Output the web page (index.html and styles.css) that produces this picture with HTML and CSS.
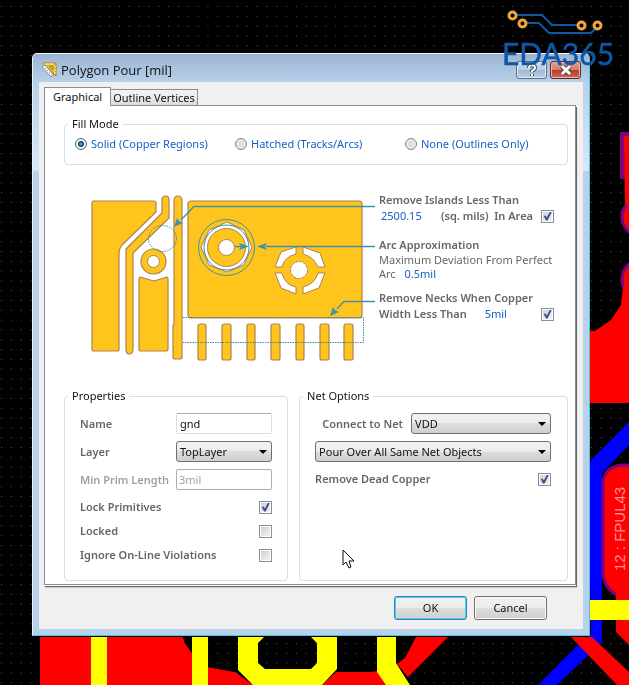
FILE: index.html
```html
<!DOCTYPE html>
<html lang="en">
<head>
    <meta charset="UTF-8">
    <meta name="viewport" content="width=device-width, initial-scale=1.0">
    <title>Polygon Pour [mil]</title>
    <link rel="stylesheet" href="styles.css">
</head>
<body>

    <!-- PCB behind the dialog -->
    <svg class="board" viewBox="0 0 629 685" preserveAspectRatio="xMinYMin slice" aria-hidden="true">
        <defs>
            <pattern id="grid" x="1" y="6" width="9.83" height="9.8" patternUnits="userSpaceOnUse">
                <rect width="1" height="1" fill="#555"/>
            </pattern>
        </defs>
        <rect width="629" height="685" fill="#000"/>
        <rect width="629" height="685" fill="url(#grid)"/>
        <g fill="#f00">
            <path d="M40 637H183L185 643L191 652L208 667L235 672L253 685H40Z"/>
            <path d="M320 687L336 672L370 672L379 671L388 687Z"/>
            <path d="M416 637H448L408 677L397 664L405 658Z"/>
        </g>
        <path d="M183 637L185 643L192 653V637ZM208 637V667L235 672H240V637Z" fill="#000"/>
        <path d="M208 637V667L235 672H240V637Z" fill="url(#grid)"/>
        <g fill="#ff0">
            <path d="M91 637H107V685H91ZM192 637H208V685H192Z"/>
            <path fill-rule="evenodd" d="M238 637H337V669L322 685H253L238 670ZM264 637L258 643V663L265 669H311L317 663V643L311 637Z"/>
            <path d="M377 637H396V663L410 685H386L377 672Z"/>
        </g>
        <path d="M588 463L629 422V445L602 473V642L557 685H538L578 645L591 634Z" fill="#00f"/>
        <path d="M571 637H592L629 672V685H617Z" fill="#f00"/>
        <path d="M620 132H629V179H620Z" fill="#800080"/>
        <circle cx="641" cy="217" r="19" fill="#f00" stroke="#800080" stroke-width="3"/>
        <circle cx="641" cy="279" r="19" fill="#f00" stroke="#800080" stroke-width="3"/>
        <path d="M624 136H629V205H625ZM623 287L621 305L611 320L595 331H590V403H629V280Z" fill="#f00"/>
        <path d="M629 580H616V632L629 645Z" fill="#f00"/>
        <path d="M640 465H622Q603 467 603 485V570Q603 588 617 595H640Z" fill="#f00" stroke="#800080" stroke-width="3"/>
        <path d="M616 588H629V600H616Z" fill="#f00"/>
        <path d="M590 600H629V620H590Z" fill="#ff0"/>
        <text class="pad-name" transform="translate(625 571) rotate(-90)">12 : FPUL43</text>
    </svg>

    <main class="dialog">
        <header class="titlebar">
            <svg class="app-icon" width="16" height="16" viewBox="0 0 16 16" aria-hidden="true">
                <path fill-rule="evenodd" d="M1 1H14V14ZM7 4L11 8V4Z" fill="#f0c020" stroke="#a8801a"/>
                <path d="M3 1V3M5 1V3M7 1V3M9 1V3M11 1V3M14 5H12M14 8H12M14 11H12" stroke="#fff2b0"/>
                <path d="M0 5L3 3L12 13L9 15Z" fill="#f4f4f4" stroke="#8c8c8c"/>
                <path d="M3 7L4 6M5 9L6 8M7 11L8 10M9 13L10 12" stroke="#999"/>
            </svg>
            <h1>Polygon Pour [mil]</h1>
            <button type="button" class="caption-btn" aria-label="Help">
                <svg width="14" height="14" viewBox="0 0 14 14"><path d="M4 5Q4 2 7 2Q10 2 10 5Q10 6 7 8V9M7 11V13" fill="none" stroke="#4a5364" stroke-width="4"/><path d="M4 5Q4 2 7 2Q10 2 10 5Q10 6 7 8V9M7 11V13" fill="none" stroke="#fff" stroke-width="2"/></svg>
            </button>
            <button type="button" class="caption-btn close" aria-label="Close">
                <svg width="14" height="12" viewBox="0 0 14 12"><path d="M3 2L11 10M11 2L3 10" stroke="#54404a" stroke-width="5"/><path d="M3 2L11 10M11 2L3 10" stroke="#fff" stroke-width="3"/></svg>
            </button>
        </header>

        <form class="client">
            <nav class="tabs">
                <button type="button" class="tab active">Graphical</button>
                <button type="button" class="tab">Outline Vertices</button>
            </nav>

            <div class="panel">
                <fieldset class="fill-mode">
                    <legend>Fill Mode</legend>
                    <label><input type="radio" name="fill" checked>Solid (Copper Regions)</label>
                    <label><input type="radio" name="fill">Hatched (Tracks/Arcs)</label>
                    <label><input type="radio" name="fill">None (Outlines Only)</label>
                </fieldset>

                <section class="preview">
                    <svg class="drawing" width="290" height="175" viewBox="85 190 290 175" aria-hidden="true">
                        <g fill="#ffc51c" stroke="#b08050" stroke-width="1.200" stroke-linejoin="round">
                            <path d="M93 201H154Q156 201 156 203V212L122 245Q119 249 119 253V349Q119 351 117 351H94Q92 351 92 349V203Q92 201 94 201Z"/>
                            <path d="M162 200Q162 196 166 196Q169 196 169 200V218L133 253V349Q133 354 129 354Q126 354 126 349V249L162 213Z"/>
                            <path d="M174 201Q174 196 178 196Q182 196 182 201V357Q182 359 180 359H175Q173 359 173 357V325H174Z"/>
                            <circle cx="153.500" cy="261.500" r="12.500"/>
                            <path d="M140 277L154 281L167 277Q168 277 168 279V349Q168 351 166 351H141Q139 351 139 349V279Q139 277 140 277Z"/>
                            <rect x="188" y="201" width="174" height="117" rx="3"/>
                            <rect x="198" y="324" width="8" height="36" rx="2"/>
                            <rect x="222" y="324" width="9" height="36" rx="2"/>
                            <rect x="247" y="324" width="8" height="36" rx="2"/>
                            <rect x="271" y="324" width="9" height="36" rx="2"/>
                            <rect x="296" y="324" width="8" height="36" rx="2"/>
                            <rect x="320" y="324" width="9" height="36" rx="2"/>
                            <rect x="344" y="324" width="9" height="36" rx="2"/>
                        </g>
                        <g fill="#fff" stroke="#b08050">
                            <circle cx="153.500" cy="261.500" r="6"/>
                            <path d="M227 222L244 230L252 247L244 265L227 272L209 265L201 247L209 230Z"/>
                            <circle cx="226.500" cy="247.500" r="19" fill="#ffc51c"/>
                            <circle cx="226.500" cy="247.500" r="8"/>
                            <circle cx="299" cy="270" r="8.500" stroke-dasharray="3 1"/>
                            <path d="M275 267L281 252L296 247V254Q284 257 282 267Z"/>
                            <path d="M303 247L320 253L325 267H318Q314 257 303 254Z"/>
                            <path d="M275 273H282Q285 285 296 287V294L281 288Z"/>
                            <path d="M325 273L319 288L303 294V287Q315 284 318 273Z"/>
                        </g>
                        <g fill="none" stroke="#3d93ad">
                            <circle cx="226.500" cy="247.500" r="28"/>
                            <circle cx="226.500" cy="247.500" r="22.500"/>
                            <path d="M375 206.500H194L181 220M235 246.500H242M375 246.500H266M375 301.500H344L337 309" stroke-width="1.300"/>
                            <g stroke="#3987ae" stroke-dasharray="1.500 1">
                                <ellipse cx="162.500" cy="238.500" rx="14" ry="13"/>
                                <path d="M183 317.500H363.500V342.500H183"/>
                            </g>
                        </g>
                        <path d="M174 227L177 218L179 221L183 223ZM249 246.500L239 243L241 246.500L239 250ZM257 246.500L267 243L265 246.500L267 250ZM330 316L333 307L335 310L339 312Z" fill="#3d93ad"/>
                    </svg>

                    <div class="notes">
                        <div class="note">
                            <h2>Remove Islands Less Than</h2>
                            <div class="line">
                                <input type="text" class="value area" value="2500.15" aria-label="Island area">
                                <label for="islands">(sq. mils)&nbsp; In Area</label>
                                <input type="checkbox" id="islands" checked>
                            </div>
                        </div>
                        <div class="note arc">
                            <h2>Arc Approximation</h2>
                            <label for="arc">Maximum Deviation From Perfect Arc</label>
                            <input type="text" class="value" id="arc" value="0.5mil">
                        </div>
                        <div class="note">
                            <h2>Remove Necks When Copper</h2>
                            <div class="line">
                                <label for="necks">Width Less Than</label>
                                <input type="text" class="value neck" value="5mil" aria-label="Neck width">
                                <input type="checkbox" id="necks" checked>
                            </div>
                        </div>
                    </div>
                </section>

                <div class="groups">
                    <fieldset class="properties">
                        <legend>Properties</legend>
                        <div class="field"><label for="name">Name</label><input type="text" id="name" value="gnd"></div>
                        <div class="field"><label for="layer">Layer</label><select id="layer"><option>TopLayer</option></select></div>
                        <div class="field"><label for="prim" class="off">Min Prim Length</label><input type="text" id="prim" value="3mil" disabled></div>
                        <div class="checks">
                            <label>Lock Primitives<input type="checkbox" checked></label>
                            <label>Locked<input type="checkbox"></label>
                            <label>Ignore On-Line Violations<input type="checkbox"></label>
                        </div>
                    </fieldset>

                    <fieldset class="net">
                        <legend>Net Options</legend>
                        <div class="field"><label for="net">Connect to Net</label><select id="net"><option>VDD</option></select></div>
                        <div class="field"><select aria-label="Pour over"><option>Pour Over All Same Net Objects</option></select></div>
                        <label class="dead">Remove Dead Copper<input type="checkbox" checked></label>
                    </fieldset>
                </div>
            </div>

            <footer>
                <button type="button" class="btn default">OK</button>
                <button type="button" class="btn">Cancel</button>
            </footer>
        </form>

        <svg class="pointer" width="14" height="20" viewBox="0 0 14 20" aria-hidden="true">
            <path d="M1 1V16L4 13L7 19L9 18L7 12H12Z" fill="#fff" stroke="#111"/>
        </svg>
    </main>

    <svg class="brand" width="116" height="64" viewBox="500 6 116 64" role="img" aria-label="EDA365">
        <path d="M517 15H542L552 25H577M527 23H539L549 33H591L596 28" fill="none" stroke="#0f57a5" stroke-width="2"/>
        <g fill="#000" stroke="#f0a63c" stroke-width="3">
            <circle cx="512.500" cy="15.500" r="3.500"/>
            <circle cx="522.500" cy="23.500" r="3.500"/>
            <circle cx="581.500" cy="25.500" r="3.500"/>
            <circle cx="597.500" cy="25.500" r="3.500"/>
        </g>
        <text x="502" y="65">EDA365</text>
    </svg>

</body>
</html>
```
FILE: styles.css
```css
body {
    margin: 0;
    background-color: #000;
    font-family: "Noto Sans", "Open Sans", sans-serif;
    font-size: 11px;
    line-height: 16px;
    color: #111;
    min-height: 100vh;
    overflow: hidden;
}

input,
select,
button {
    box-sizing: border-box;
    margin: 0;
    font: inherit;
    color: inherit;
}

h1,
h2 {
    margin: 0;
    font-size: inherit;
}

.board {
    position: fixed;
    top: 0;
    left: 0;
    width: 100%;
    height: 100%;
}

.pad-name {
    font-family: "Liberation Sans", sans-serif;
    font-size: 15px;
    fill: #ff9090;
}

/* Window frame */
.dialog {
    position: relative;
    margin: 53px 39px 49px 32px;
    padding: 0 6px 6px;
    border: 1px solid #46c8e0;
    border-top-color: #f4f8fc;
    border-left-color: #e8f2fb;
    border-radius: 5px 5px 0 0;
    background: linear-gradient(#9ab4d3, #b8d0e9 28px, #dbe8f6 116px, #b9d1ea 118px);
}

.titlebar {
    display: flex;
    align-items: center;
    gap: 3px;
    height: 28px;
    padding: 4px 2px 0 3px;
    box-sizing: border-box;
}

.titlebar h1 {
    flex: 1;
    font-family: "Open Sans", sans-serif;
    font-size: 13px;
    font-weight: normal;
}

.caption-btn {
    display: flex;
    align-items: center;
    justify-content: center;
    width: 31px;
    height: 18px;
    padding: 0;
    border: 1px solid #59708c;
    border-radius: 3px;
    background: linear-gradient(#c9d9ea, #b9cde3 50%, #9db7d3 50%, #bcd2e8);
    box-shadow: inset 0 0 0 1px #dfeaf5;
}

.caption-btn.close {
    border-color: #5c2a2c;
    background: linear-gradient(#e2a193, #d27a69 50%, #b83a26 50%, #cf6a50);
    box-shadow: inset 0 0 0 1px #e8b5aa;
}

.client {
    padding: 5px 7px 0 5px;
    background-color: #f0f0f0;
}

/* Tabs */
.tabs {
    display: flex;
    align-items: flex-end;
    height: 18px;
}

.tab {
    height: 16px;
    padding: 0 2px;
    border: 1px solid #898c95;
    border-left: none;
    border-bottom: none;
    background: linear-gradient(#f3f3f3, #ececec 50%, #dcdcdc);
    line-height: 15px;
}

.tab.active {
    position: relative;
    z-index: 1;
    height: 19px;
    margin-bottom: -1px;
    padding: 0 8px 1px;
    border-left: 1px solid #898c95;
    background: #fff;
}

.panel {
    padding: 10px 7px 3px 19px;
    border: 1px solid #898c95;
    background-color: #fff;
    box-shadow: 0 1px 0 #fff, 1px 2px 0 #666, 1px 3px 1px #ccc;
}

fieldset {
    min-width: 0;
    margin: 0;
    border: 1px solid #d5dfe5;
    border-radius: 4px;
}

legend {
    margin: 0;
    padding: 0 4px;
}

/* Fill mode */
.fill-mode {
    padding: 4px 10px 12px;
    display: grid;
    grid-template-columns: 160px 170px 1fr;
}

.fill-mode legend {
    margin-left: -7px;
}

.fill-mode label {
    display: flex;
    align-items: center;
    gap: 4px;
    color: #1461c4;
}

input[type="radio"] {
    appearance: none;
    width: 12px;
    height: 12px;
    border: 1px solid #858585;
    border-radius: 50%;
    background: radial-gradient(#ddd 30%, #f6f6f6);
}

input[type="radio"]:checked {
    border-color: #4a6478;
    background: radial-gradient(#38a0cc 10%, #12405e 38%, #eef4f8 48%);
}

input[type="checkbox"] {
    appearance: none;
    flex: none;
    width: 13px;
    height: 13px;
    border: 1px solid #8e8f8f;
    background: linear-gradient(135deg, #cbcfd5, #f6f6f6);
    background-clip: content-box;
    background-color: #f4f4f4;
    padding: 1px;
}

input[type="checkbox"]:checked::before {
    content: "";
    display: block;
    width: 9px;
    height: 9px;
    background-color: #3c4d90;
    clip-path: polygon(8% 50%, 28% 44%, 42% 68%, 78% 0, 100% 0, 50% 100%, 34% 100%);
}

/* Copper drawing with its settings */
.preview {
    display: flex;
    gap: 4px;
    margin: 25px 0 23px 21px;
}

.drawing {
    flex: none;
}

.notes {
    flex: 1;
    min-width: 0;
    padding: 2px 14px 0 0;
    color: #666;
}

h2,
.line label,
.groups label {
    font-weight: 600;
    color: #666;
}

.line {
    display: flex;
    align-items: center;
}

.line input[type="checkbox"] {
    margin-left: auto;
}

.note.arc {
    margin: 13px 0 9px;
    line-height: 14px;
}

.arc h2 {
    line-height: 16px;
}

.value {
    width: 40px;
    height: 14px;
    padding: 0;
    border: none;
    background: none;
    color: #1461c4;
}

.arc .value {
    margin-left: 6px;
}

.value.area {
    width: 62px;
    padding-left: 2px;
}

.value.neck {
    margin-left: 18px;
}

/* Lower groups */
.groups {
    display: grid;
    grid-template-columns: 5fr 6fr;
    gap: 11px;
}

.groups fieldset {
    padding: 9px 15px 13px;
}

.groups .net {
    padding-right: 16px;
}

.groups legend {
    margin-left: -12px;
}

.field {
    display: flex;
    align-items: center;
    margin-bottom: 7px;
}

.properties .field label {
    width: 96px;
}

.groups .off {
    color: #a0a0a0;
}

.field input,
.field select {
    flex: 1;
    min-width: 0;
    height: 21px;
    padding: 0 3px;
    border: 1px solid #dadde3;
    border-top-color: #abadb3;
    border-radius: 2px;
    background-color: #fff;
}

.field input:disabled {
    padding: 0 2px;
    border-color: #afafaf;
    color: #a0a0a0;
}

.field select {
    appearance: none;
    border-color: #707070;
    border-radius: 3px;
    background: url("data:image/svg+xml,%3Csvg xmlns='http://www.w3.org/2000/svg' width='8' height='4'%3E%3Cpath d='M0 0H8L4 4Z'/%3E%3C/svg%3E") no-repeat right 4px center,
        linear-gradient(#f2f2f2, #ebebeb 50%, #dddddd 50%, #cfcfcf);
}

.net .field label {
    width: 96px;
    padding-right: 8px;
    box-sizing: border-box;
    text-align: right;
}

.checks {
    margin-top: -2px;
}

.checks label,
.dead {
    display: flex;
    align-items: center;
    justify-content: space-between;
    height: 24px;
}

.groups .dead {
    height: 20px;
}

footer {
    display: flex;
    justify-content: flex-end;
    gap: 7px;
    padding: 11px 29px 9px;
}

.btn {
    width: 73px;
    height: 24px;
    padding: 0;
    border: 1px solid #707070;
    border-radius: 3px;
    background: linear-gradient(#f2f2f2, #ebebeb 50%, #dddddd 50%, #cfcfcf);
    box-shadow: inset 0 0 0 1px #fafafa;
}

.btn.default {
    border-color: #3c7fb1;
    box-shadow: inset 0 0 0 1px #48d0f4;
}

/* Things that lie over the window */
.pointer {
    position: absolute;
    left: 309px;
    top: 495px;
}

.brand {
    position: absolute;
    top: 6px;
    right: 13px;
}

.brand text {
    font-family: Lato, sans-serif;
    font-size: 30px;
    fill: #0f57a5;
    stroke: #0f57a5;
    stroke-width: 0.5px;
}
```
